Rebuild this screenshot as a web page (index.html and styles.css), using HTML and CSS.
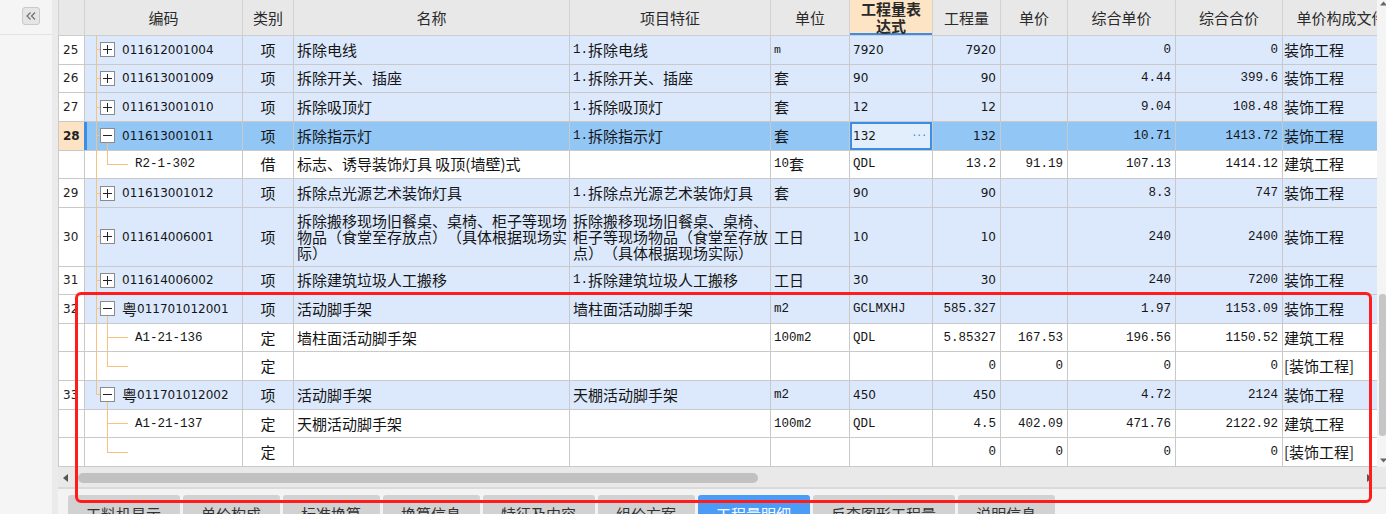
FILE: index.html
```html
<!DOCTYPE html>
<html lang="zh-CN">
<head>
<meta charset="utf-8">
<title>分部分项</title>
<link rel="stylesheet" href="styles.css">
</head>
<body>
<div class="app">
  <aside class="side">
    <div class="side-top">
      <button class="collapse" type="button" aria-label="收起">
        <svg width="10" height="8" viewBox="0 0 10 8"><polyline points="4.5,0.5 1,4 4.5,7.5" fill="none" stroke="#6f6f6f" stroke-width="1.2"/><polyline points="9,0.5 5.5,4 9,7.5" fill="none" stroke="#6f6f6f" stroke-width="1.2"/></svg>
      </button>
    </div>
  </aside>
  <div class="splitter"></div>
  <main class="main">
    <div class="grid-wrap">
      <div class="grid">
        <div class="row head">
          <div class="c"></div>
          <div class="c ctr">编码</div>
          <div class="c ctr">类别</div>
          <div class="c ctr">名称</div>
          <div class="c ctr">项目特征</div>
          <div class="c ctr">单位</div>
          <div class="c ctr hl">工程量表<br>达式</div>
          <div class="c ctr">工程量</div>
          <div class="c ctr">单价</div>
          <div class="c ctr">综合单价</div>
          <div class="c ctr">综合合价</div>
          <div class="c ctr">单价构成文件</div>
        </div>

        <div class="row item">
          <div class="c no">25</div>
          <div class="c code t1"><span class="tg plus"></span><span class="cd">011612001004</span></div>
          <div class="c ctr">项</div>
          <div class="c">拆除电线</div>
          <div class="c"><span class="n">1.</span>拆除电线</div>
          <div class="c"><span class="n sm">m</span></div>
          <div class="c s">7920</div>
          <div class="c r s">7920</div>
          <div class="c r"></div>
          <div class="c r n">0</div>
          <div class="c r n">0</div>
          <div class="c f">装饰工程</div>
        </div>

        <div class="row item">
          <div class="c no">26</div>
          <div class="c code t1"><span class="tg plus"></span><span class="cd">011613001009</span></div>
          <div class="c ctr">项</div>
          <div class="c">拆除开关、插座</div>
          <div class="c"><span class="n">1.</span>拆除开关、插座</div>
          <div class="c">套</div>
          <div class="c s">90</div>
          <div class="c r s">90</div>
          <div class="c r"></div>
          <div class="c r n">4.44</div>
          <div class="c r n">399.6</div>
          <div class="c f">装饰工程</div>
        </div>

        <div class="row item">
          <div class="c no">27</div>
          <div class="c code t1"><span class="tg plus"></span><span class="cd">011613001010</span></div>
          <div class="c ctr">项</div>
          <div class="c">拆除吸顶灯</div>
          <div class="c"><span class="n">1.</span>拆除吸顶灯</div>
          <div class="c">套</div>
          <div class="c s">12</div>
          <div class="c r s">12</div>
          <div class="c r"></div>
          <div class="c r n">9.04</div>
          <div class="c r n">108.48</div>
          <div class="c f">装饰工程</div>
        </div>

        <div class="row item current">
          <div class="c no cur">28</div>
          <div class="c code t2 mark"><span class="tg"></span><span class="cd">011613001011</span></div>
          <div class="c ctr">项</div>
          <div class="c">拆除指示灯</div>
          <div class="c"><span class="n">1.</span>拆除指示灯</div>
          <div class="c">套</div>
          <div class="c s sel"><span>132</span><span class="dots">···</span></div>
          <div class="c r s">132</div>
          <div class="c r"></div>
          <div class="c r n">10.71</div>
          <div class="c r n">1413.72</div>
          <div class="c f">装饰工程</div>
        </div>

        <div class="row">
          <div class="c no"></div>
          <div class="c code sub c2"><span class="n">R2-1-302</span></div>
          <div class="c ctr">借</div>
          <div class="c">标志、诱导装饰灯具 吸顶(墙壁)式</div>
          <div class="c"></div>
          <div class="c"><span class="n">10</span>套</div>
          <div class="c n">QDL</div>
          <div class="c r n">13.2</div>
          <div class="c r n">91.19</div>
          <div class="c r n">107.13</div>
          <div class="c r n">1414.12</div>
          <div class="c f">建筑工程</div>
        </div>

        <div class="row item">
          <div class="c no">29</div>
          <div class="c code t1"><span class="tg plus"></span><span class="cd">011613001012</span></div>
          <div class="c ctr">项</div>
          <div class="c">拆除点光源艺术装饰灯具</div>
          <div class="c"><span class="n">1.</span>拆除点光源艺术装饰灯具</div>
          <div class="c">套</div>
          <div class="c s">90</div>
          <div class="c r s">90</div>
          <div class="c r"></div>
          <div class="c r n">8.3</div>
          <div class="c r n">747</div>
          <div class="c f">装饰工程</div>
        </div>

        <div class="row item tall">
          <div class="c no">30</div>
          <div class="c code t1"><span class="tg plus"></span><span class="cd">011614006001</span></div>
          <div class="c ctr">项</div>
          <div class="c wrap">拆除搬移现场旧餐桌、桌椅、柜子等现场物品（食堂至存放点）（具体根据现场实际）</div>
          <div class="c wrap">拆除搬移现场旧餐桌、桌椅、柜子等现场物品（食堂至存放点）（具体根据现场实际）</div>
          <div class="c">工日</div>
          <div class="c s">10</div>
          <div class="c r s">10</div>
          <div class="c r"></div>
          <div class="c r n">240</div>
          <div class="c r n">2400</div>
          <div class="c f">装饰工程</div>
        </div>

        <div class="row item">
          <div class="c no">31</div>
          <div class="c code t1"><span class="tg plus"></span><span class="cd">011614006002</span></div>
          <div class="c ctr">项</div>
          <div class="c">拆除建筑垃圾人工搬移</div>
          <div class="c"><span class="n">1.</span>拆除建筑垃圾人工搬移</div>
          <div class="c">工日</div>
          <div class="c s">30</div>
          <div class="c r s">30</div>
          <div class="c r"></div>
          <div class="c r n">240</div>
          <div class="c r n">7200</div>
          <div class="c f">装饰工程</div>
        </div>

        <div class="row item">
          <div class="c no">32</div>
          <div class="c code t2"><span class="tg"></span>粤<span class="cd">011701012001</span></div>
          <div class="c ctr">项</div>
          <div class="c">活动脚手架</div>
          <div class="c">墙柱面活动脚手架</div>
          <div class="c n">m2</div>
          <div class="c n">GCLMXHJ</div>
          <div class="c r n">585.327</div>
          <div class="c r"></div>
          <div class="c r n">1.97</div>
          <div class="c r n">1153.09</div>
          <div class="c f">装饰工程</div>
        </div>

        <div class="row">
          <div class="c no"></div>
          <div class="c code sub c1"><span class="n">A1-21-136</span></div>
          <div class="c ctr">定</div>
          <div class="c">墙柱面活动脚手架</div>
          <div class="c"></div>
          <div class="c n">100m2</div>
          <div class="c n">QDL</div>
          <div class="c r n">5.85327</div>
          <div class="c r n">167.53</div>
          <div class="c r n">196.56</div>
          <div class="c r n">1150.52</div>
          <div class="c f">建筑工程</div>
        </div>

        <div class="row">
          <div class="c no"></div>
          <div class="c code sub c2"></div>
          <div class="c ctr">定</div>
          <div class="c"></div>
          <div class="c"></div>
          <div class="c"></div>
          <div class="c"></div>
          <div class="c r n">0</div>
          <div class="c r n">0</div>
          <div class="c r n">0</div>
          <div class="c r n">0</div>
          <div class="c f">[装饰工程]</div>
        </div>

        <div class="row item">
          <div class="c no">33</div>
          <div class="c code t3"><span class="tg"></span>粤<span class="cd">011701012002</span></div>
          <div class="c ctr">项</div>
          <div class="c">活动脚手架</div>
          <div class="c">天棚活动脚手架</div>
          <div class="c n">m2</div>
          <div class="c s">450</div>
          <div class="c r s">450</div>
          <div class="c r"></div>
          <div class="c r n">4.72</div>
          <div class="c r n">2124</div>
          <div class="c f">装饰工程</div>
        </div>

        <div class="row">
          <div class="c no"></div>
          <div class="c code sub c3"><span class="n">A1-21-137</span></div>
          <div class="c ctr">定</div>
          <div class="c">天棚活动脚手架</div>
          <div class="c"></div>
          <div class="c n">100m2</div>
          <div class="c n">QDL</div>
          <div class="c r n">4.5</div>
          <div class="c r n">402.09</div>
          <div class="c r n">471.76</div>
          <div class="c r n">2122.92</div>
          <div class="c f">建筑工程</div>
        </div>

        <div class="row">
          <div class="c no"></div>
          <div class="c code sub c4"></div>
          <div class="c ctr">定</div>
          <div class="c"></div>
          <div class="c"></div>
          <div class="c"></div>
          <div class="c"></div>
          <div class="c r n">0</div>
          <div class="c r n">0</div>
          <div class="c r n">0</div>
          <div class="c r n">0</div>
          <div class="c f">[装饰工程]</div>
        </div>
      </div>
      <div class="vscroll">
        <svg class="varrow" width="7" height="5" viewBox="0 0 7 5"><polygon points="3.5,0.5 7,4.5 0,4.5" fill="#666"/></svg>
        <div class="vthumb"></div>
        <svg class="varrow down" width="7" height="5" viewBox="0 0 7 5"><polygon points="0,0.5 7,0.5 3.5,4.5" fill="#666"/></svg>
      </div>
    </div>
    <div class="hscroll">
      <svg class="harrow" width="5" height="8" viewBox="0 0 5 8"><polygon points="5,0 5,8 0,4" fill="#555"/></svg>
      <div class="hthumb"></div>
      <svg class="harrow right" width="5" height="8" viewBox="0 0 5 8"><polygon points="0,0 0,8 5,4" fill="#555"/></svg>
    </div>
    <nav class="tabbar">
      <div class="tab">工料机显示</div>
      <div class="tab">单价构成</div>
      <div class="tab">标准换算</div>
      <div class="tab">换算信息</div>
      <div class="tab">特征及内容</div>
      <div class="tab">组价方案</div>
      <div class="tab active">工程量明细</div>
      <div class="tab">反查图形工程量</div>
      <div class="tab">说明信息</div>
    </nav>
  </main>
  <div class="callout"></div>
</div>
</body>
</html>
```

FILE: styles.css
```css
* { box-sizing: border-box; }

html, body {
  margin: 0;
  padding: 0;
}

body {
  width: 1386px;
  height: 514px;
  overflow: hidden;
  background: #f3f3f3;
  font-family: "Noto Sans CJK SC", sans-serif;
  color: #151515;
}

.app {
  position: relative;
  display: flex;
  width: 1386px;
  height: 514px;
}

/* left collapsed panel */
.side {
  width: 52px;
  flex: none;
  background: #f5f5f5;
}

.side-top {
  height: 35px;
  border-bottom: 1px solid #e2e2e2;
  padding: 7px 0 0 22px;
}

.collapse {
  width: 18px;
  height: 18px;
  padding: 0;
  border: 1px solid #cacaca;
  border-radius: 3px;
  background: #e5e5e5;
  display: flex;
  align-items: center;
  justify-content: center;
}

.splitter {
  width: 6px;
  flex: none;
  background: #ebebeb;
}

.main {
  flex: 1;
  min-width: 0;
  display: flex;
  flex-direction: column;
}

.grid-wrap {
  height: 467px;
  flex: none;
  display: flex;
  background: #fff;
}

.grid {
  width: 1319px;
  flex: none;
  overflow: hidden;
}

/* rows & cells */
.row {
  --tl: #f9c27c;
  width: 1342px;
  height: 28.65px;
  display: grid;
  grid-template-columns: 26px 158px 51px 276px 201px 79px 83px 68px 67px 108px 107px 118px;
  border-bottom: 1px solid #c9c9c9;
  background: #fff;
}

.row.item { background: #dce9fc; }
.row.current { background: #92c6f5; }
.row.tall { height: 58.7px; }

.row.head {
  height: 36px;
  background: #e8e8e8;
  border-bottom-color: #cdcdcd;
  color: #2a2a2a;
}

.c {
  display: flex;
  align-items: center;
  min-width: 0;
  overflow: hidden;
  white-space: nowrap;
  padding: 0 2px 0 3px;
  border-left: 1px solid #c9c9c9;
  font-size: 15px;
  line-height: 16px;
}

.head .c { border-left-color: #d2d2d2; }

.c.ctr { justify-content: center; text-align: center; padding: 0; }
.c.r { justify-content: flex-end; padding: 0 4px 0 2px; }
.c.f { padding-left: 1px; }

.c.wrap {
  white-space: normal;
  text-spacing-trim: space-all;
}

.c.hl {
  background: #fde4c5;
  font-weight: bold;
  line-height: 17px;
  padding-bottom: 1px;
  box-shadow: inset 0 -2px 0 #3b8ee7;
}

.c.no {
  background: #fff;
  font-family: "DejaVu Sans", sans-serif;
  font-size: 12px;
  padding-left: 4px;
  color: #222;
}

.c.no.cur {
  background: #fde3c3;
  font-weight: bold;
}

.n, .c.n {
  font-family: "Liberation Mono", monospace;
  font-size: 12.5px;
}

.n.sm { font-size: 11.5px; }

.s, .c.s {
  font-family: "DejaVu Sans", sans-serif;
  font-size: 12px;
}

.c.sel {
  justify-content: space-between;
  background: #e3eefc;
  box-shadow: inset 0 0 0 2px #3a8ee6;
  padding: 0 5px 0 3px;
}

.dots {
  color: #3a8ee6;
  font-size: 12px;
  letter-spacing: 1px;
}

/* code / tree column */
.c.code {
  padding-left: 15px;
  background-repeat: no-repeat;
}

.c.code.sub { padding-left: 50px; }

.c.code.mark { box-shadow: inset 2px 0 0 #3a8ee6; border-left-color: #3a8ee6; }

.cd {
  font-family: "DejaVu Sans", sans-serif;
  font-size: 12px;
}

.tg {
  width: 15px;
  height: 15px;
  flex: none;
  margin-right: 7px;
  border: 1px solid #8b8b8b;
  background:
    linear-gradient(#222, #222) 2px 6px / 9px 1px no-repeat,
    #fff;
}

.tg.plus {
  background:
    linear-gradient(#222, #222) 2px 6px / 9px 1px no-repeat,
    linear-gradient(#222, #222) 6px 2px / 1px 9px no-repeat,
    #fff;
}

.t1 {
  background-image: linear-gradient(var(--tl), var(--tl)), linear-gradient(var(--tl), var(--tl));
  background-position: 11px 0, 11px 50%;
  background-size: 1px 100%, 5px 1px;
}

.t2 {
  background-image: linear-gradient(var(--tl), var(--tl)), linear-gradient(var(--tl), var(--tl)), linear-gradient(var(--tl), var(--tl));
  background-position: 11px 0, 11px 50%, 22px 100%;
  background-size: 1px 100%, 5px 1px, 1px 50%;
}

.t3 {
  background-image: linear-gradient(var(--tl), var(--tl)), linear-gradient(var(--tl), var(--tl)), linear-gradient(var(--tl), var(--tl));
  background-position: 11px 0, 11px 50%, 22px 100%;
  background-size: 1px 50%, 5px 1px, 1px 50%;
}

.c1 {
  background-image: linear-gradient(var(--tl), var(--tl)), linear-gradient(var(--tl), var(--tl)), linear-gradient(var(--tl), var(--tl));
  background-position: 11px 0, 22px 0, 22px 50%;
  background-size: 1px 100%, 1px 100%, 21px 1px;
}

.c2 {
  background-image: linear-gradient(var(--tl), var(--tl)), linear-gradient(var(--tl), var(--tl)), linear-gradient(var(--tl), var(--tl));
  background-position: 11px 0, 22px 0, 22px 50%;
  background-size: 1px 100%, 1px 50%, 21px 1px;
}

.c3 {
  background-image: linear-gradient(var(--tl), var(--tl)), linear-gradient(var(--tl), var(--tl));
  background-position: 22px 0, 22px 50%;
  background-size: 1px 100%, 21px 1px;
}

.c4 {
  background-image: linear-gradient(var(--tl), var(--tl)), linear-gradient(var(--tl), var(--tl));
  background-position: 22px 0, 22px 50%;
  background-size: 1px 50%, 21px 1px;
}

/* vertical scrollbar */
.vscroll {
  width: 9px;
  flex: none;
  background: #f4f4f4;
  display: flex;
  flex-direction: column;
  align-items: center;
  padding-top: 1px;
}

.varrow { flex: none; margin-left: 3px; }
.varrow.down { margin-top: auto; margin-bottom: 4px; }

.vthumb {
  width: 7px;
  height: 142px;
  margin-top: 288px;
  margin-left: 2px;
  border-radius: 3px;
  background: #c6c6c6;
}

/* horizontal scrollbar */
.hscroll {
  height: 22px;
  flex: none;
  display: flex;
  align-items: flex-start;
  padding-top: 6px;
  background: #e9e9e9;
  border-bottom: 2px solid #dadada;
}

.harrow { flex: none; margin: 1px 10px 0 5px; }
.harrow.right { margin: 1px 14px 0 auto; }

.hthumb {
  width: 680px;
  height: 10px;
  border-radius: 5px;
  background: #c1c1c1;
}

/* bottom tabs */
.tabbar {
  flex: 1;
  display: flex;
  gap: 3px;
  padding: 6px 0 0 10px;
  background: #f3f3f3;
  overflow: hidden;
}

.tab {
  flex: none;
  height: 30px;
  padding: 11px 19px 0 18px;
  border-radius: 3px 3px 0 0;
  background: #d2d2d2;
  color: #333;
  font-size: 15px;
  line-height: 16px;
  white-space: nowrap;
}

.tab.active {
  background: #4a9cf6;
  color: #fff;
}

/* red annotation frame */
.callout {
  position: absolute;
  left: 75px;
  top: 292px;
  width: 1297px;
  height: 211px;
  border: 3px solid #ff1c1c;
  border-radius: 6px;
  pointer-events: none;
}
```
